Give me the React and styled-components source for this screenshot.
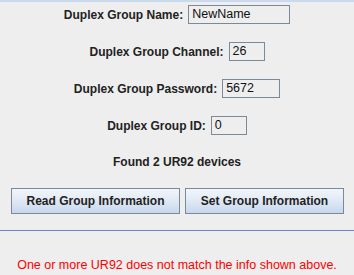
import React from "react";
import styled, { createGlobalStyle } from "styled-components";

const GlobalStyle = createGlobalStyle`
  html, body {
    margin: 0;
    padding: 0;
    background: #eeeeee;
  }
  body {
    font-family: "Liberation Sans", Arial, sans-serif;
    font-size: 12px;
    color: #222222;
  }
`;

const Panel = styled.div`
  width: 354px;
  height: 275px;
  background: #eeeeee;
  border-top: 2px solid #c9daef;
  box-sizing: border-box;
  display: flex;
  flex-direction: column;
  align-items: center;
  padding-top: 3px;
  overflow: hidden;
`;

const FieldRow = styled.div`
  display: flex;
  align-items: center;
  gap: 5px;
  height: 19px;
  margin-bottom: 18px;
`;

const Label = styled.span`
  font-weight: bold;
  font-size: 12px;
  color: #222222;
  white-space: nowrap;
`;

const Field = styled.div`
  width: ${(p) => p.$width}px;
  height: 19px;
  box-sizing: border-box;
  border: 1px solid #7a8a99;
  background: #eeeeee;
  color: #111111;
  font-size: 12.5px;
  line-height: 17px;
  padding-left: 3px;
  white-space: nowrap;
`;

const Status = styled.div`
  font-weight: bold;
  font-size: 12px;
  line-height: 15px;
  margin-top: 2px;
  color: #222222;
`;

const ButtonBar = styled.div`
  display: flex;
  gap: 5px;
  margin-top: 18px;
  padding-left: 1px;
`;

const Button = styled.button`
  width: ${(p) => p.$width}px;
  height: 26px;
  box-sizing: border-box;
  border: 1px solid #7a8a99;
  background: linear-gradient(#f2f5fa 0%, #e6edf7 35%, #c7d7ed 100%);
  font-family: "Liberation Sans", Arial, sans-serif;
  font-weight: bold;
  font-size: 12px;
  color: #222222;
  padding: 0;
  cursor: pointer;
`;

const Separator = styled.div`
  align-self: stretch;
  height: 1px;
  background: #6a86c4;
  margin-top: 16px;
`;

const Warning = styled.div`
  color: #ff0000;
  font-size: 12.5px;
  line-height: 15px;
  margin-top: 27px;
  white-space: nowrap;
`;

const fields = [
  { label: "Duplex Group Name:", value: "NewName", width: 102 },
  { label: "Duplex Group Channel:", value: "26", width: 36 },
  { label: "Duplex Group Password:", value: "5672", width: 58 },
  { label: "Duplex Group ID:", value: "0", width: 36 },
];

export default function App() {
  return (
    <>
      <GlobalStyle />
      <Panel>
        {fields.map((f) => (
          <FieldRow key={f.label}>
            <Label>{f.label}</Label>
            <Field $width={f.width}>{f.value}</Field>
          </FieldRow>
        ))}
        <Status>Found 2 UR92 devices</Status>
        <ButtonBar>
          <Button $width={169}>Read Group Information</Button>
          <Button $width={159}>Set Group Information</Button>
        </ButtonBar>
        <Separator />
        <Warning>One or more UR92 does not match the info shown above.</Warning>
      </Panel>
    </>
  );
}
